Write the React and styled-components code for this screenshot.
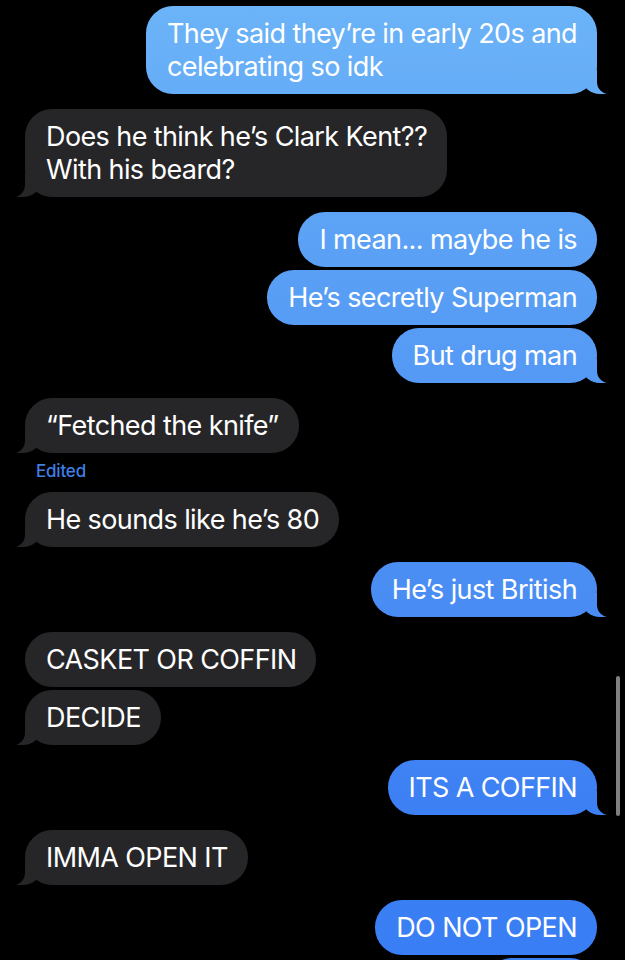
import React from 'react';
import styled, { createGlobalStyle, css } from 'styled-components';

const GlobalStyle = createGlobalStyle`
  html, body {
    margin: 0;
    padding: 0;
    background: #000;
  }
  body {
    font-family: Inter, "Noto Sans", "Liberation Sans", sans-serif;
    -webkit-font-smoothing: antialiased;
    overflow: hidden;
  }
`;

// each message is a list of lines, as they wrap in the bubble
const thread = [
  { side: 'out', messages: [['They said they’re in early 20s and', 'celebrating so idk']] },
  { side: 'in', messages: [['Does he think he’s Clark Kent??', 'With his beard?']] },
  { side: 'out', messages: [['I mean... maybe he is'], ['He’s secretly Superman'], ['But drug man']] },
  { side: 'in', messages: [['“Fetched the knife”']], edited: true },
  { side: 'in', messages: [['He sounds like he’s 80']] },
  { side: 'out', messages: [['He’s just British']] },
  { side: 'in', messages: [['CASKET OR COFFIN'], ['DECIDE']] },
  { side: 'out', messages: [['ITS A COFFIN']] },
  { side: 'in', messages: [['IMMA OPEN IT']] },
  { side: 'out', messages: [['DO NOT OPEN']], more: true },
];

export default function App() {
  return (
    <>
      <GlobalStyle />
      <Screen>
        <Thread>
          {thread.map((group, i) => (
            <React.Fragment key={i}>
              <Group $side={group.side}>
                {group.messages.map((lines, j) => (
                  <Bubble
                    key={j}
                    $side={group.side}
                    $tail={!group.more && j === group.messages.length - 1}
                  >
                    {lines.map((line, k) => (
                      <Line key={k}>{line}</Line>
                    ))}
                  </Bubble>
                ))}
                {group.more && <NextBubble />}
              </Group>
              {group.edited && <Edited>Edited</Edited>}
            </React.Fragment>
          ))}
        </Thread>
        <ScrollThumb />
      </Screen>
    </>
  );
}

const blueFill = css`
  background-image: linear-gradient(
    to bottom,
    #6cb4f8 0px,
    #5ba1f5 240px,
    #4a8df3 590px,
    #3c80f4 800px,
    #3a7ef5 960px
  );
  background-attachment: fixed;
`;

const Screen = styled.div`
  position: relative;
  width: 625px;
  height: 960px;
  background: #000;
  overflow: hidden;
`;

const Thread = styled.div`
  display: flex;
  flex-direction: column;
  gap: 15px;
  padding: 6px 28px 0 25px;
`;

const Group = styled.div`
  display: flex;
  flex-direction: column;
  gap: 3px;
  align-items: ${(p) => (p.$side === 'out' ? 'flex-end' : 'flex-start')};
`;

const Bubble = styled.div`
  position: relative;
  width: max-content;
  padding: 11px 20px 11px 21px;
  border-radius: 27px;
  font-size: 27px;
  line-height: 33px;
  letter-spacing: -0.6px;
  color: #fff;

  ${(p) => (p.$side === 'out'
    ? blueFill
    : css`
      background: #262628;
    `)}

  ${(p) => p.$tail && p.$side === 'out' && css`
    &::before {
      content: "";
      position: absolute;
      bottom: 0;
      right: -9px;
      width: 24px;
      height: 24px;
      ${blueFill}
      border-bottom-left-radius: 18px 16px;
    }
    &::after {
      content: "";
      position: absolute;
      bottom: 0;
      right: -28px;
      width: 28px;
      height: 24px;
      background: #000;
      border-bottom-left-radius: 12px;
    }
  `}

  ${(p) => p.$tail && p.$side === 'in' && css`
    &::before {
      content: "";
      position: absolute;
      bottom: 0;
      left: -8px;
      width: 24px;
      height: 24px;
      background: #262628;
      border-bottom-right-radius: 18px 16px;
    }
    &::after {
      content: "";
      position: absolute;
      bottom: 0;
      left: -28px;
      width: 28px;
      height: 24px;
      background: #000;
      border-bottom-right-radius: 12px;
    }
  `}
`;

const Line = styled.div`
  white-space: nowrap;
`;

const NextBubble = styled.div`
  width: 112px;
  height: 55px;
  border-radius: 27px;
  ${blueFill}
`;

const Edited = styled.div`
  margin: -6px 0 -3px 11px;
  font-size: 17px;
  line-height: 18px;
  font-weight: 500;
  letter-spacing: -0.2px;
  color: #3f7fe6;
`;

const ScrollThumb = styled.div`
  position: absolute;
  right: 5px;
  top: 676px;
  width: 4px;
  height: 140px;
  border-radius: 2px;
  background: #808080;
`;
